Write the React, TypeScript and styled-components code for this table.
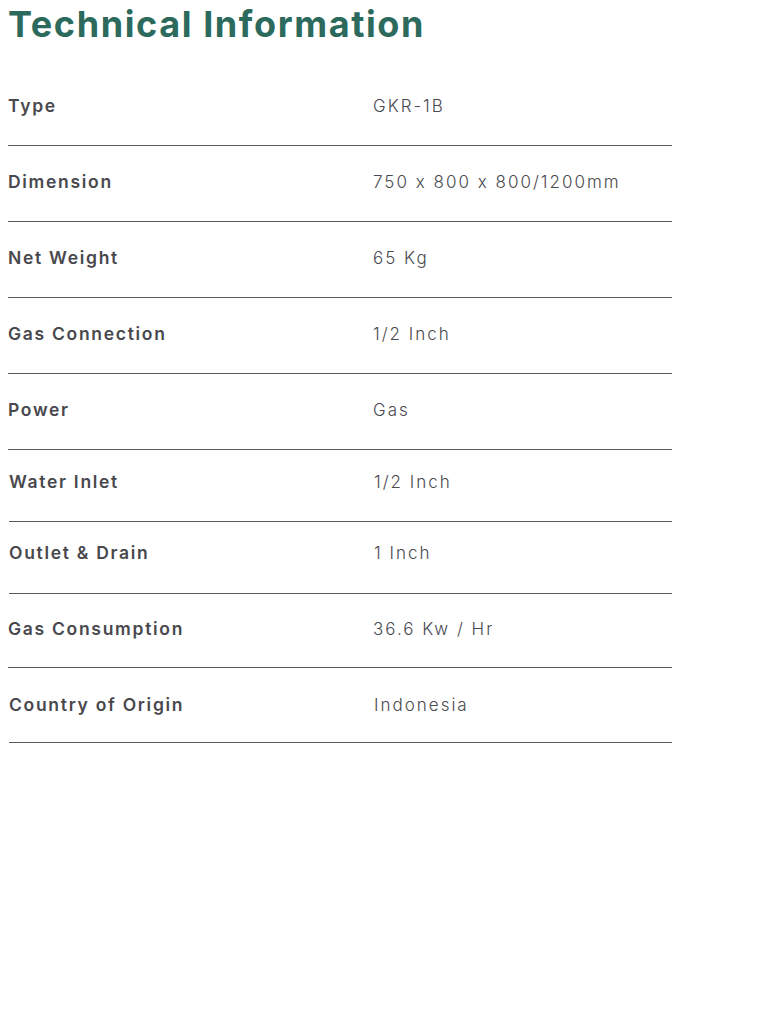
import React from 'react';
import styled, { createGlobalStyle } from 'styled-components';

const specs = [
  { label: 'Type', value: 'GKR-1B', pad: 26, height: 75, shift: 0 },
  { label: 'Dimension', value: '750 x 800 x 800/1200mm', pad: 26, height: 75, shift: 0 },
  { label: 'Net Weight', value: '65 Kg', pad: 26, height: 75, shift: 0 },
  { label: 'Gas Connection', value: '1/2 Inch', pad: 26, height: 75, shift: 0 },
  { label: 'Power', value: 'Gas', pad: 26, height: 75, shift: 0 },
  { label: 'Water Inlet', value: '1/2 Inch', pad: 22, height: 71, shift: 1 },
  { label: 'Outlet & Drain', value: '1 Inch', pad: 21, height: 71, shift: 1 },
  { label: 'Gas Consumption', value: '36.6 Kw / Hr', pad: 25, height: 73, shift: 0 },
  { label: 'Country of Origin', value: 'Indonesia', pad: 27, height: 74, shift: 1 },
];

export default function App() {
  return (
    <>
      <GlobalStyle />
      <Section>
        <Title>Technical Information</Title>
        <SpecList>
          {specs.map((s) => (
            <SpecRow key={s.label} $pad={s.pad} $height={s.height} $shift={s.shift}>
              <Label>{s.label}</Label>
              <Value>{s.value}</Value>
            </SpecRow>
          ))}
        </SpecList>
      </Section>
    </>
  );
}

const GlobalStyle = createGlobalStyle`
  body {
    margin: 0;
    background: #ffffff;
    font-family: Inter, 'Noto Sans', sans-serif;
    font-feature-settings: 'calt' 0;
  }
`;

const Section = styled.section`
  padding: 0 0 0 8px;
  width: 664px;
`;

const Title = styled.h2`
  margin: 0;
  padding-top: 4px;
  height: 66px;
  font-size: 36px;
  line-height: 40px;
  font-weight: 700;
  letter-spacing: 1.6px;
  color: #2b6a5c;
`;

const SpecList = styled.div`
  display: flex;
  flex-direction: column;
`;

const SpecRow = styled.div<{ $pad: number; $height: number; $shift: number }>`
  display: grid;
  grid-template-columns: 365px 1fr;
  align-items: start;
  box-sizing: content-box;
  height: ${(p) => p.$height - p.$pad}px;
  padding-top: ${(p) => p.$pad}px;
  margin-left: ${(p) => p.$shift}px;
  border-bottom: 1px solid #5a5a5e;
`;

const Label = styled.div`
  font-size: 17.5px;
  line-height: 20px;
  font-weight: 600;
  letter-spacing: 1.7px;
  color: #48484d;
`;

const Value = styled.div`
  font-size: 17px;
  line-height: 20px;
  font-weight: 300;
  letter-spacing: 2px;
  color: #4a4a4f;
`;
